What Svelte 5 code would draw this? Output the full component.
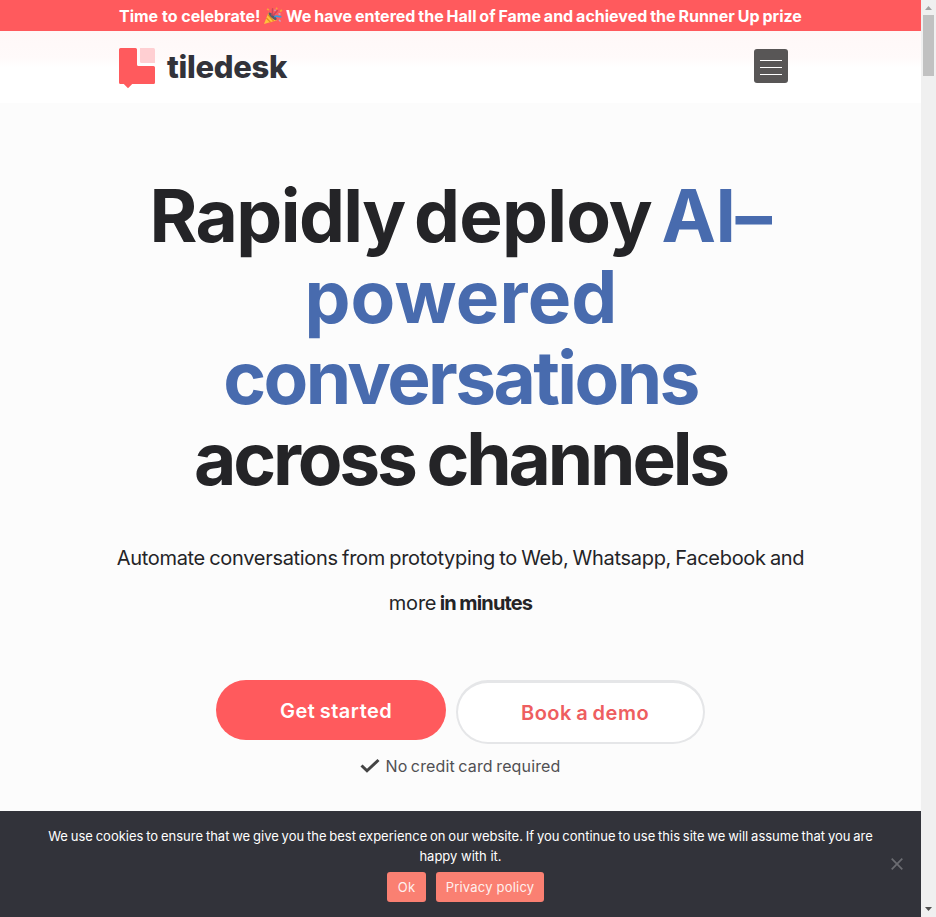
<script>
  const heading = [
    [{ text: 'Rapidly', cls: 'l1 first' }, { text: ' deploy ', cls: 'l1' }, { text: 'AI–', cls: 'l1 blue' }],
    [{ text: 'powered', cls: 'l2 blue' }],
    [{ text: 'conversations', cls: 'l3 blue' }],
    [{ text: 'across channels', cls: 'l4' }]
  ];
</script>

<div class="window">
  <div class="page">
    <div class="banner">
      <span class="b1">Time to celebrate!</span>
      <svg class="party" width="20" height="18" viewBox="0 0 20 18">
        <path d="M1 17 5.5 5.5 14 13.2Z" fill="#ffc23c" />
        <path d="M3.4 11 7.6 15.3M4.8 7.7 10.6 14.2" stroke="#e88a20" stroke-width="1.2" />
        <ellipse cx="9.6" cy="9.3" rx="1.8" ry="5.2" transform="rotate(-47 9.6 9.3)" fill="#5a5a6c" />
        <path d="M8.6 8.5C10.5 6.5 8.8 4 9.7 1.2M10.5 9C11 5 13.7 6.3 14.5 3.1" fill="none" stroke="#c9485c" stroke-width="1.5" />
        <path d="M11.3 9.7C14 8 15 10.4 18.4 9.5" fill="none" stroke="#359cdd" stroke-width="1.6" />
        <path d="m4 2 2 1M13 1l1.3 1M17 4.5 19 3" stroke="#f7a23c" stroke-width="1.6" />
        <path d="m15.5 6.5 2 1M16 13l1.6 1.5M11.5 2.8l1 1" stroke="#c9a0c0" stroke-width="1.5" />
      </svg>
      <span class="b2">We have entered the Hall of Fame and achieved the Runner Up prize</span>
    </div>

    <header>
      <a class="brand" href="#home">
        <svg width="37" height="41" viewBox="0 0 37 41">
          <path d="M1.5 0H16.5Q18 0 18 1.5V16.5Q18 18 19.5 18H34.5Q36 18 36 19.5V34.5Q36 36 34.5 36H13.2L9 40.2 4.8 36H1.5Q0 36 0 34.5V1.5Q0 0 1.5 0Z" fill="#ff5a5d" />
          <path d="M21 0h13.5Q36 0 36 1.5V15H22.5Q21 15 21 13.5Z" fill="#ffcfd2" />
        </svg>
        <span>tiledesk</span>
      </a>
      <button class="menu" aria-label="Menu"><i></i><i></i><i></i></button>
    </header>

    <main>
      <h1>
        {#each heading as line}
          <span class="line">{#each line as part}<span class={part.cls}>{part.text}</span>{/each}</span>
        {/each}
      </h1>
      <p class="lead">
        <span class="p1">Automate conversations from prototyping to Web, Whatsapp, Facebook and</span>
        <span class="p2">more <b>in minutes</b></span>
      </p>
      <div class="actions">
        <a class="primary" href="#start"><span>Get started</span></a>
        <a class="secondary" href="#demo"><span>Book a demo</span></a>
      </div>
      <div class="note">
        <svg width="20" height="16" viewBox="0 0 20 16"><path d="M1.5 7.5 7 12.8 18.5 2" fill="none" stroke="#444" stroke-width="3" /></svg>
        <span>No credit card required</span>
      </div>
    </main>

    <footer>
      <div class="cookie">
        <span class="c1">We use cookies to ensure that we give you the best experience on our website. If you continue to use this site we will assume that you are</span>
        <span class="c2">happy with it.</span>
      </div>
      <div class="choices"><button class="ok">Ok</button><button class="policy">Privacy policy</button></div>
      <svg class="close" width="12" height="12" viewBox="0 0 12 12"><path d="M.7.7 11.3 11.3M11.3.7.7 11.3" stroke="#6b6c71" stroke-width="1.7" /></svg>
    </footer>
  </div>
  <div class="scroll">
    <svg width="7" height="4" viewBox="0 0 7 4"><path d="M0 4 3.5 0 7 4Z" fill="#a3a3a3" /></svg>
    <div class="thumb"></div>
    <svg class="down" width="7" height="4" viewBox="0 0 7 4"><path d="M0 0 3.5 4 7 0Z" fill="#505050" /></svg>
  </div>
</div>

<style>
  :global(body) { margin: 0; overflow: hidden; }
  * { box-sizing: border-box; }
  .window { display: flex; width: 936px; height: 917px; overflow: hidden; font-family: Inter, sans-serif; }
  .page { width: 921px; height: 917px; display: flex; flex-direction: column; background: #fcfcfc; }
  span { white-space: nowrap; }
  a { text-decoration: none; color: inherit; }
  button { border: 0; padding: 0; font: inherit; }

  .banner { height: 31px; flex: none; background: #ff5a5d; color: #fff; display: flex; align-items: center; padding: 1px 0 0 119px; font-size: 16px; font-weight: 700; }
  .b1 { width: 144px; letter-spacing: 0; }
  .party { flex: none; width: 20px; margin-right: 3px; }
  .b2 { letter-spacing: 0; word-spacing: -0.9px; }

  header { height: 72px; flex: none; display: flex; justify-content: space-between; align-items: flex-start; padding: 17px 133px 0 119px; background: linear-gradient(#fff8f8 0, #fffafa 27px, #fff 36px); }
  .brand { display: flex; }
  .brand span { margin: 0 0 0 11px; font-size: 31px; line-height: 37px; font-weight: 800; color: #32333a; letter-spacing: -0.3px; }
  .menu { width: 34px; height: 34px; margin-top: 1px; border-radius: 3px; background: #585656; display: flex; flex-direction: column; align-items: center; justify-content: center; gap: 6px; padding-top: 2px; }
  .menu i { width: 22px; height: 1px; background: #fff; }

  main { height: 708px; flex: none; padding-top: 72px; display: flex; flex-direction: column; align-items: center; }
  h1 { margin: 0; font-size: 73px; line-height: 81px; font-weight: 700; color: #242427; text-align: center; }
  .line { display: block; white-space: pre; }
  .line span { white-space: pre; }
  .l1 { letter-spacing: -0.8px; word-spacing: -7px; }
  .l1.first { letter-spacing: -1.6px; }
  .l1.blue { letter-spacing: -0.5px; }
  .l2 { letter-spacing: 0.2px; padding-left: 1px; }
  .l3 { letter-spacing: -2.6px; }
  .l4 { letter-spacing: -3.15px; word-spacing: -2.5px; }
  .blue { color: #486bae; }
  .lead { margin: 37px 0 0; font-size: 20px; line-height: 45px; color: #242427; display: flex; flex-direction: column; align-items: center; }
  .p1 { letter-spacing: -0.3px; word-spacing: -1.1px; }
  .p2 { letter-spacing: -0.2px; word-spacing: -2px; }
  .p2 b { letter-spacing: -0.85px; word-spacing: -0.5px; }
  .actions { display: flex; gap: 10px; margin-top: 54px; align-items: flex-start; font-size: 20px; font-weight: 600; }
  .actions span { letter-spacing: 0.5px; word-spacing: -1.2px; }
  .primary { width: 230px; height: 60px; border-radius: 30px; background: #ff5a5d; color: #fff; display: flex; align-items: center; padding: 2px 0 0 64px; }
  .secondary { width: 249px; height: 64px; border: 2px solid #e5e6e8; border-top-width: 3px; border-radius: 32px; background: #fff; color: #ee5e60; display: flex; align-items: center; padding: 1px 0 0 63px; }
  .note { display: flex; align-items: center; gap: 5px; margin-top: 11px; height: 22px; font-size: 16px; color: #505053; }
  .note span { letter-spacing: 0.15px; word-spacing: -1.2px; }

  footer { height: 106px; flex: none; background: #32333a; color: #fff; position: relative; padding-top: 15px; font-size: 13px; line-height: 20px; }
  .cookie { display: flex; flex-direction: column; align-items: center; }
  .c1 { word-spacing: -0.83px; }
  .choices { display: flex; justify-content: center; gap: 10px; margin-top: 6px; padding-left: 10px; }
  .choices button { height: 30px; border-radius: 3px; background: #fa8072; color: #fff0ee; letter-spacing: 0.2px; }
  .ok { width: 39px; }
  .policy { width: 108px; }
  .close { position: absolute; right: 18px; top: 47px; }

  .scroll { width: 15px; height: 917px; background: #f0f0f0; display: flex; flex-direction: column; align-items: center; padding-top: 6px; }
  .thumb { width: 11px; height: 61px; margin-top: 5px; background: #c1c1c1; }
  .down { margin: auto 0 6px; }
</style>
